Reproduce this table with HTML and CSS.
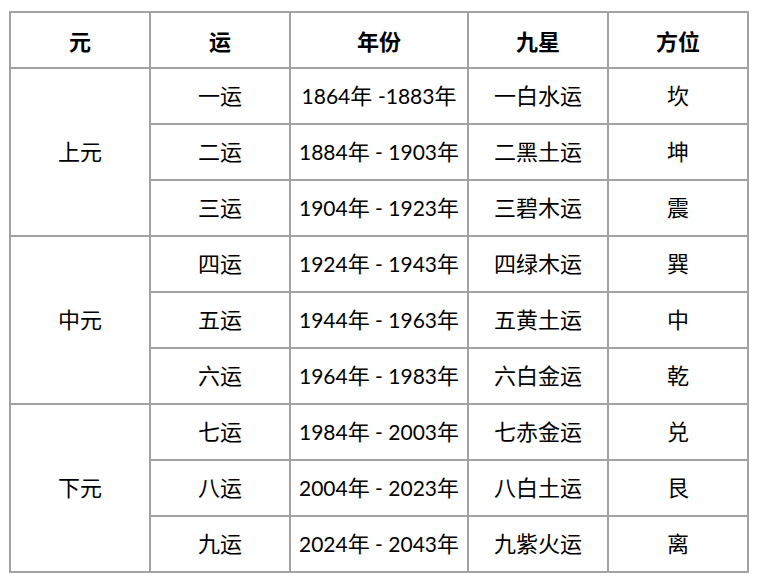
FILE: index.html
```html
<!DOCTYPE html>
<html lang="zh">
<head>
<meta charset="utf-8">
<link rel="stylesheet" href="styles.css">
</head>
<body>
<table class="grid">
  <colgroup>
    <col class="c1"><col class="c2"><col class="c3"><col class="c4"><col class="c5">
  </colgroup>
  <thead>
    <tr><th>元</th><th>运</th><th>年份</th><th>九星</th><th>方位</th></tr>
  </thead>
  <tbody>
    <tr><td rowspan="3">上元</td><td>一运</td><td><span class="n">1864</span>年 <span class="n">-1883</span>年</td><td>一白水运</td><td>坎</td></tr>
    <tr><td>二运</td><td><span class="n">1884</span>年<span class="n"> - 1903</span>年</td><td>二黑土运</td><td>坤</td></tr>
    <tr><td>三运</td><td><span class="n">1904</span>年<span class="n"> - 1923</span>年</td><td>三碧木运</td><td>震</td></tr>
    <tr><td rowspan="3">中元</td><td>四运</td><td><span class="n">1924</span>年<span class="n"> - 1943</span>年</td><td>四绿木运</td><td>巽</td></tr>
    <tr><td>五运</td><td><span class="n">1944</span>年<span class="n"> - 1963</span>年</td><td>五黄土运</td><td>中</td></tr>
    <tr><td>六运</td><td><span class="n">1964</span>年<span class="n"> - 1983</span>年</td><td>六白金运</td><td>乾</td></tr>
    <tr><td rowspan="3">下元</td><td>七运</td><td><span class="n">1984</span>年<span class="n"> - 2003</span>年</td><td>七赤金运</td><td>兑</td></tr>
    <tr><td>八运</td><td><span class="n">2004</span>年<span class="n"> - 2023</span>年</td><td>八白土运</td><td>艮</td></tr>
    <tr><td>九运</td><td><span class="n">2024</span>年<span class="n"> - 2043</span>年</td><td>九紫火运</td><td>离</td></tr>
  </tbody>
</table>
</body>
</html>
```
FILE: styles.css
```css
html, body {
  margin: 0;
  padding: 0;
  background: #ffffff;
}
body {
  padding: 11px 0 0 9px;
  font-family: "Lato", "Noto Sans CJK SC", sans-serif;
  color: #000000;
}
.grid {
  border-collapse: collapse;
  table-layout: fixed;
  width: 738px;
}
.c1, .c2, .c4, .c5 { width: 140px; }
.c3 { width: 178px; }
.grid th, .grid td {
  border: 2px solid #a2a2a2;
  height: 54px;
  padding: 0;
  text-align: center;
  vertical-align: middle;
  font-size: 22px;
  line-height: 1;
  white-space: nowrap;
}
.grid th {
  font-weight: 700;
  height: 51px;
  padding-top: 3px;
}
.grid td {
  font-weight: 400;
}
.n {
  font-size: 21px;
}
```
